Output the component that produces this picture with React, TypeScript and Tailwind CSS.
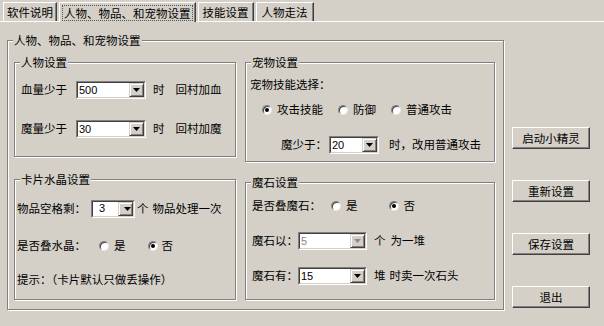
import React from "react";

const BG = "bg-[#d4d0c8]";

function Box({ title, className = "", children }: { title: string; className?: string; children?: React.ReactNode }) {
  return (
    <div className={`relative shrink-0 border border-[#808080] shadow-[inset_1px_1px_0_#fff,1px_1px_0_#fff] ${className}`}>
      <span className={`absolute left-[5px] top-[-8px] ${BG} px-[1px] leading-[14px] whitespace-nowrap`}>{title}</span>
      {children}
    </div>
  );
}

function Combo({ value, className = "", disabled = false }: { value: string; className?: string; disabled?: boolean }) {
  return (
    <div className={`flex h-[18px] shrink-0 border border-t-[#808080] border-l-[#808080] border-b-white border-r-white ${className}`}>
      <div className="flex flex-1 border border-t-[#404040] border-l-[#404040] border-b-[#d4d0c8] border-r-[#d4d0c8] bg-white">
        <div className={`flex flex-1 items-center pl-[1px] font-['Liberation_Sans',sans-serif] text-[11px] leading-none ${disabled ? "text-[#8a8a8a]" : "text-black"}`}>
          {value}
        </div>
        <div className="flex w-[15px] items-center justify-center border border-t-[#d4d0c8] border-l-[#d4d0c8] border-b-[#404040] border-r-[#404040] bg-[#d4d0c8] shadow-[inset_1px_1px_0_#fff,inset_-1px_-1px_0_#808080]">
          <svg width="7" height="4" viewBox="0 0 7 4">
            <polygon points="0,0 7,0 3.5,4" fill={disabled ? "#8a8a8a" : "#000"} />
          </svg>
        </div>
      </div>
    </div>
  );
}

function Radio({ checked = false }: { checked?: boolean }) {
  return (
    <span className="flex h-[10px] w-[10px] shrink-0 items-center justify-center rounded-full border border-t-[#808080] border-l-[#808080] border-b-[#e8e8e8] border-r-[#e8e8e8] bg-white shadow-[inset_1px_1px_0_#404040]">
      {checked && <span className="h-[4px] w-[4px] rounded-full bg-black" />}
    </span>
  );
}

function Btn({ children }: { children: React.ReactNode }) {
  return (
    <div className={`flex h-[22px] w-[78px] items-center justify-center ${BG} border border-t-white border-l-white border-b-[#404040] border-r-[#404040] shadow-[inset_-1px_-1px_0_#808080] leading-[14px]`}>
      {children}
    </div>
  );
}

function Tab({ children, selected = false, className = "" }: { children: React.ReactNode; selected?: boolean; className?: string }) {
  return (
    <div
      className={`flex h-[19px] shrink-0 items-center border-t border-l border-white border-r border-r-[#404040] shadow-[inset_-1px_0_0_#808080] ${BG} ${
        selected ? "relative z-10 -mb-px h-[20px]" : ""
      } ${className}`}
    >
      {selected ? (
        <span className="mx-[2px] border border-dotted border-[#555] px-[1px] leading-[14px]">{children}</span>
      ) : (
        <span className="px-[3px] leading-[14px]">{children}</span>
      )}
    </div>
  );
}

export default function App() {
  return (
    <div
      className={`flex h-[326px] w-[604px] flex-col overflow-hidden ${BG} font-["Noto_Sans_CJK_SC","Liberation_Sans",sans-serif] text-[11.5px] text-black`}
    >
      {/* tab strip */}
      <div className="flex h-[21px] shrink-0 items-end gap-[2px] pl-[3px]">
        <Tab>软件说明</Tab>
        <Tab selected>人物、物品、和宠物设置</Tab>
        <Tab className="[&>span]:px-[4px]">技能设置</Tab>
        <Tab className="[&>span]:px-[5px]">人物走法</Tab>
      </div>

      {/* panel */}
      <div className="flex flex-1 border-t border-white pl-[7px]">
        <Box title="人物、物品、和宠物设置" className="mt-[18px] flex h-[270px] w-[497px] gap-[9px] pl-[6px] pt-[21px]">
          {/* left column */}
          <div className="flex w-[222px] flex-col">
            <Box title="人物设置" className="h-[95px]">
              <div className="flex flex-col pl-[6px] pt-[18px]">
                <div className="flex h-[18px] items-center">
                  <span className="w-[55px]">血量少于</span>
                  <Combo value="500" className="w-[70px]" />
                  <span className="ml-[7px]">时</span>
                  <span className="ml-[11px]">回村加血</span>
                </div>
                <div className="mt-[21px] flex h-[18px] items-center">
                  <span className="w-[55px]">魔量少于</span>
                  <Combo value="30" className="w-[70px]" />
                  <span className="ml-[7px]">时</span>
                  <span className="ml-[11px]">回村加魔</span>
                </div>
              </div>
            </Box>
            <Box title="卡片水晶设置" className="mt-[22px] h-[121px]">
              <div className="flex flex-col pl-[2px] pt-[20px]">
                <div className="flex h-[17px] items-center">
                  <span className="w-[74px] whitespace-nowrap">物品空格剩：</span>
                  <Combo value="3" className="h-[17px] w-[44px] [&_div]:pl-[3px]" />
                  <span className="ml-[2px]">个</span>
                  <span className="ml-[4px]">物品处理一次</span>
                </div>
                <div className="mt-[22px] flex h-[14px] items-center">
                  <span className="w-[82px] whitespace-nowrap">是否叠水晶：</span>
                  <Radio />
                  <span className="ml-[5px]">是</span>
                  <span className="ml-[22px]"><Radio checked /></span>
                  <span className="ml-[4px]">否</span>
                </div>
                <div className="mt-[20px] flex h-[14px] items-center whitespace-nowrap">提示：（卡片默认只做丢操作）</div>
              </div>
            </Box>
          </div>

          {/* right column */}
          <div className="flex w-[250px] flex-col">
            <Box title="宠物设置" className="h-[100px]">
              <div className="flex flex-col pl-[4px] pt-[15px]">
                <div className="flex h-[14px] items-center">宠物技能选择：</div>
                <div className="mt-[11px] flex h-[14px] items-center pl-[12px]">
                  <Radio checked />
                  <span className="ml-[5px]">攻击技能</span>
                  <span className="ml-[15px]"><Radio /></span>
                  <span className="ml-[5px]">防御</span>
                  <span className="ml-[15px]"><Radio /></span>
                  <span className="ml-[5px]">普通攻击</span>
                </div>
                <div className="mt-[19px] flex h-[18px] items-center pl-[31px]">
                  <span className="w-[48px] whitespace-nowrap">魔少于：</span>
                  <Combo value="20" className="w-[50px]" />
                  <span className="ml-[10px] whitespace-nowrap">时，改用普通攻击</span>
                </div>
              </div>
            </Box>
            <Box title="魔石设置" className="mt-[20px] h-[118px]">
              <div className="flex flex-col pl-[6px] pt-[16px]">
                <div className="flex h-[14px] items-center">
                  <span className="w-[79px] whitespace-nowrap">是否叠魔石：</span>
                  <Radio />
                  <span className="ml-[5px]">是</span>
                  <span className="ml-[31px]"><Radio checked /></span>
                  <span className="ml-[5px]">否</span>
                </div>
                <div className="mt-[19px] flex h-[18px] items-center">
                  <span className="w-[46px] whitespace-nowrap">魔石以：</span>
                  <Combo value="5" disabled className="w-[69px]" />
                  <span className="ml-[7px]">个</span>
                  <span className="ml-[5px]">为一堆</span>
                </div>
                <div className="mt-[17px] flex h-[18px] items-center">
                  <span className="w-[46px] whitespace-nowrap">魔石有：</span>
                  <Combo value="15" className="w-[69px]" />
                  <span className="ml-[7px]">堆</span>
                  <span className="ml-[4px]">时卖一次石头</span>
                </div>
              </div>
            </Box>
          </div>
        </Box>

        {/* buttons */}
        <div className="ml-[8px] flex flex-col gap-[31px] pt-[105px]">
          <Btn>启动小精灵</Btn>
          <Btn>重新设置</Btn>
          <Btn>保存设置</Btn>
          <Btn>退出</Btn>
        </div>
      </div>
    </div>
  );
}
